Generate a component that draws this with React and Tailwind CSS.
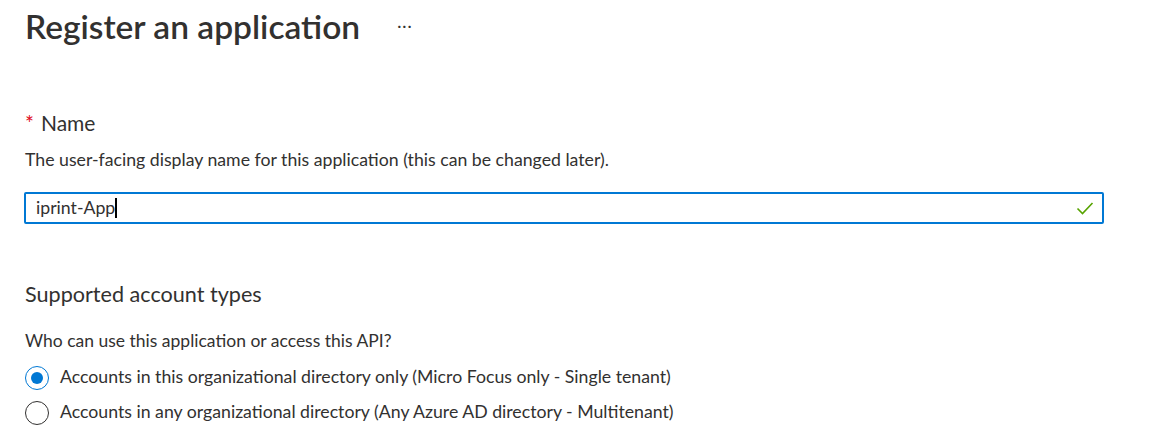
import React from "react";

function Radio({ checked, label }) {
  return (
    <label className="flex items-center h-[35px]">
      <span className={`flex items-center justify-center w-[24px] h-[24px] rounded-full border ${checked ? "border-[#0078d4]" : "border-[#323130]"}`}>
        {checked && <span className="w-[12px] h-[12px] rounded-full bg-[#0078d4]" />}
      </span>
      <span className="ml-[11px] text-[17.7px] text-[#323130]">{label}</span>
    </label>
  );
}

export default function App() {
  return (
    <div className="w-[1153px] h-[433px] bg-white overflow-hidden font-['Lato',sans-serif] text-[#323130]">
      <div className="pl-[25px] pt-[6px]">
        <div className="flex items-center h-[42px]">
          <h1 className="text-[33.5px] font-semibold text-[#323130] leading-none">Register an application</h1>
          <span className="ml-[37px] text-[16px] tracking-[1px] text-[#323130] -mt-[4px]">···</span>
        </div>

        <div className="mt-[62px] flex items-center text-[21px] leading-none h-[24px]">
          <span className="text-[#e00b1c] mr-[7px]">*</span>
          <span>Name</span>
        </div>
        <p className="mt-[15px] text-[17.7px] leading-[22px]">
          The user-facing display name for this application (this can be changed later).
        </p>

        <div className="mt-[21px] w-[1080px] -ml-[1px] h-[32px] border-2 border-[#0078d4] rounded-[2px] flex items-center px-[10px]">
          <span className="text-[17.7px] text-[#323130]">iprint-App</span>
          <span className="w-[2px] h-[20px] bg-black" />
          <svg className="ml-auto -mr-[2px]" width="18" height="14" viewBox="0 0 18 14">
            <path d="M1.5 7.5 L6.5 12.5 L16.5 2" fill="none" stroke="#57a300" strokeWidth="1.6" />
          </svg>
        </div>

        <h2 className="mt-[56px] text-[21.6px] leading-[28px]">Supported account types</h2>
        <p className="mt-[22px] text-[17.5px] leading-[22px]">Who can use this application or access this API?</p>

        <div className="mt-[8px]">
          <Radio checked label="Accounts in this organizational directory only (Micro Focus only - Single tenant)" />
          <Radio label="Accounts in any organizational directory (Any Azure AD directory - Multitenant)" />
        </div>
      </div>
    </div>
  );
}
